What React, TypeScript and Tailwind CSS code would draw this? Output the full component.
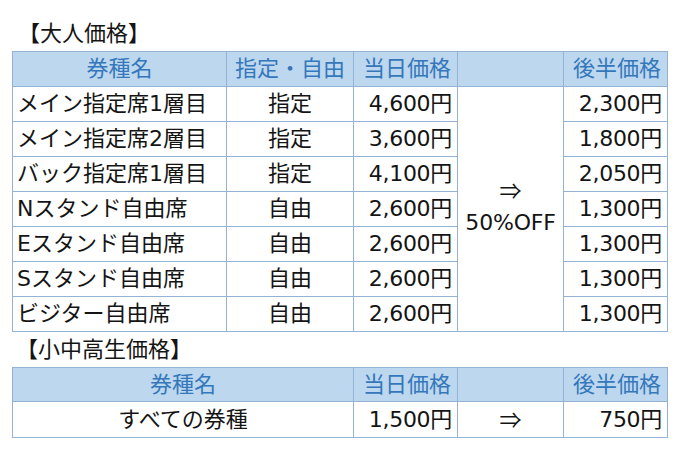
const adultRows = [
  { name: "メイン指定席1層目", type: "指定", day: "4,600円", late: "2,300円" },
  { name: "メイン指定席2層目", type: "指定", day: "3,600円", late: "1,800円" },
  { name: "バック指定席1層目", type: "指定", day: "4,100円", late: "2,050円" },
  { name: "Nスタンド自由席", type: "自由", day: "2,600円", late: "1,300円" },
  { name: "Eスタンド自由席", type: "自由", day: "2,600円", late: "1,300円" },
  { name: "Sスタンド自由席", type: "自由", day: "2,600円", late: "1,300円" },
  { name: "ビジター自由席", type: "自由", day: "2,600円", late: "1,300円" },
];

const cell = "border border-[#94b3d4] p-0 align-middle";
const head = "bg-[#bdd7ee] text-[#3478bb]";
const cjk = { fontFamily: '"Noto Sans CJK JP", sans-serif' };

export default function App() {
  return (
    <div
      className="w-[680px] h-[453px] bg-white pt-[17px] pl-[12px] text-[22px] text-[#141414] leading-none"
      style={{ fontFamily: '"DejaVu Sans", "Noto Sans CJK JP", sans-serif' }}
    >
      <div className="h-[34px] flex items-center pl-[6px]">【大人価格】</div>

      <table className="border-collapse table-fixed w-[655px]">
        <colgroup>
          <col className="w-[214px]" />
          <col className="w-[127px]" />
          <col className="w-[104px]" />
          <col className="w-[106px]" />
          <col className="w-[104px]" />
        </colgroup>
        <thead>
          <tr className="h-[35px]">
            <th className={`${cell} ${head} font-normal text-center`}>券種名</th>
            <th className={`${cell} ${head} font-normal text-center`}>指定・自由</th>
            <th className={`${cell} ${head} font-normal text-right pr-[6px]`}>当日価格</th>
            <th className={`${cell} ${head}`}></th>
            <th className={`${cell} ${head} font-normal text-right pr-[6px]`}>後半価格</th>
          </tr>
        </thead>
        <tbody>
          {adultRows.map((r, i) => (
            <tr key={r.name} className="h-[35px]">
              <td className={`${cell} pl-[4px] whitespace-nowrap`}>{r.name}</td>
              <td className={`${cell} text-center`}>{r.type}</td>
              <td className={`${cell} text-right pr-[5px] whitespace-nowrap tracking-[-0.3px]`}>{r.day}</td>
              {i === 0 && (
                <td rowSpan={7} className={`${cell} text-center`}>
                  <div className="pb-[6px]">
                    <div className="leading-[34px]" style={cjk}>⇒</div>
                    <div className="leading-[34px] tracking-[-0.2px]">50%OFF</div>
                  </div>
                </td>
              )}
              <td className={`${cell} text-right pr-[5px] whitespace-nowrap tracking-[-0.3px]`}>{r.late}</td>
            </tr>
          ))}
        </tbody>
      </table>

      <div className="h-[35px] flex items-center pl-[4px]">【小中高生価格】</div>

      <table className="border-collapse table-fixed w-[655px]">
        <colgroup>
          <col className="w-[341px]" />
          <col className="w-[104px]" />
          <col className="w-[106px]" />
          <col className="w-[104px]" />
        </colgroup>
        <thead>
          <tr className="h-[34px]">
            <th className={`${cell} ${head} font-normal text-center`}>券種名</th>
            <th className={`${cell} ${head} font-normal text-right pr-[6px]`}>当日価格</th>
            <th className={`${cell} ${head}`}></th>
            <th className={`${cell} ${head} font-normal text-right pr-[6px]`}>後半価格</th>
          </tr>
        </thead>
        <tbody>
          <tr className="h-[36px]">
            <td className={`${cell} text-center`}>すべての券種</td>
            <td className={`${cell} text-right pr-[5px] whitespace-nowrap tracking-[-0.3px]`}>1,500円</td>
            <td className={`${cell} text-center pb-[3px]`} style={cjk}>⇒</td>
            <td className={`${cell} text-right pr-[5px] whitespace-nowrap tracking-[-0.3px]`}>750円</td>
          </tr>
        </tbody>
      </table>
    </div>
  );
}
